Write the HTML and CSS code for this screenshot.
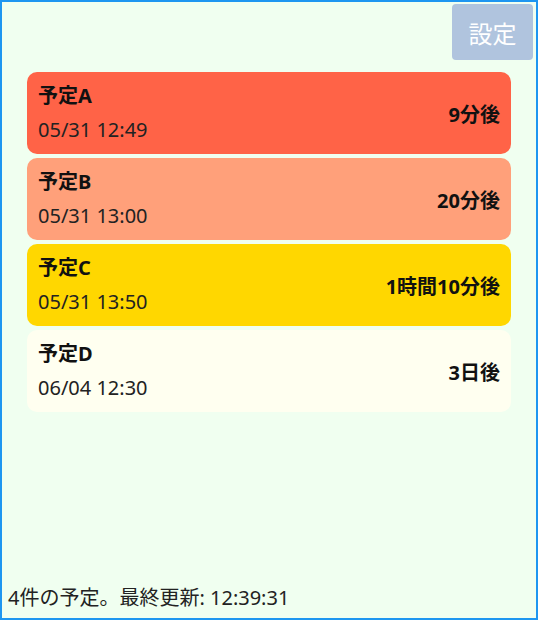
FILE: index.html
```html
<!DOCTYPE html>
<html lang="ja">
<head>
<meta charset="utf-8">
<title>予定</title>
<link rel="stylesheet" href="styles.css">
</head>
<body>
<div class="app">
  <div class="toolbar">
    <button class="settings">設定</button>
  </div>
  <ul class="list">
    <li class="card card-a">
      <div class="info">
        <div class="title">予定A</div>
        <div class="date">05/31 12:49</div>
      </div>
      <div class="remain">9分後</div>
    </li>
    <li class="card card-b">
      <div class="info">
        <div class="title">予定B</div>
        <div class="date">05/31 13:00</div>
      </div>
      <div class="remain">20分後</div>
    </li>
    <li class="card card-c">
      <div class="info">
        <div class="title">予定C</div>
        <div class="date">05/31 13:50</div>
      </div>
      <div class="remain">1時間10分後</div>
    </li>
    <li class="card card-d">
      <div class="info">
        <div class="title">予定D</div>
        <div class="date">06/04 12:30</div>
      </div>
      <div class="remain">3日後</div>
    </li>
  </ul>
  <div class="status">4件の予定。最終更新: 12:39:31</div>
</div>
</body>
</html>
```
FILE: styles.css
```css
html, body {
  margin: 0;
  padding: 0;
}
body {
  font-family: "Noto Sans", "Noto Sans CJK JP", sans-serif;
  color: #111;
}
.app {
  box-sizing: border-box;
  width: 538px;
  height: 620px;
  border: 2px solid #1e96f0;
  background: #f0fff0;
  display: flex;
  flex-direction: column;
}
.toolbar {
  display: flex;
  justify-content: flex-end;
  padding: 2px 3px 0 0;
}
.settings {
  width: 81px;
  height: 56px;
  border: none;
  border-radius: 4px;
  background: #b0c4de;
  color: #fff;
  font-family: "Noto Sans CJK JP", sans-serif;
  font-size: 24px;
  padding: 0;
}
.list {
  list-style: none;
  margin: 12px 25px 0;
  padding: 0;
  display: flex;
  flex-direction: column;
  gap: 4px;
}
.card {
  box-sizing: border-box;
  height: 82px;
  border-radius: 10px;
  padding: 0 11px;
  display: flex;
  align-items: center;
  justify-content: space-between;
}
.card-a { background: #ff6347; }
.card-b { background: #ffa07a; }
.card-c { background: #ffd700; }
.card-d { background: #fffff0; }
.info {
  display: flex;
  flex-direction: column;
  gap: 8px;
}
.title {
  font-size: 20px;
  font-weight: bold;
  line-height: 26px;
}
.date {
  font-size: 20px;
  line-height: 26px;
  color: #222;
}
.remain {
  font-size: 20px;
  font-weight: bold;
}
.status {
  margin-top: auto;
  padding: 0 0 7px 6px;
  font-size: 20px;
  line-height: 26px;
  color: #222;
}
```
